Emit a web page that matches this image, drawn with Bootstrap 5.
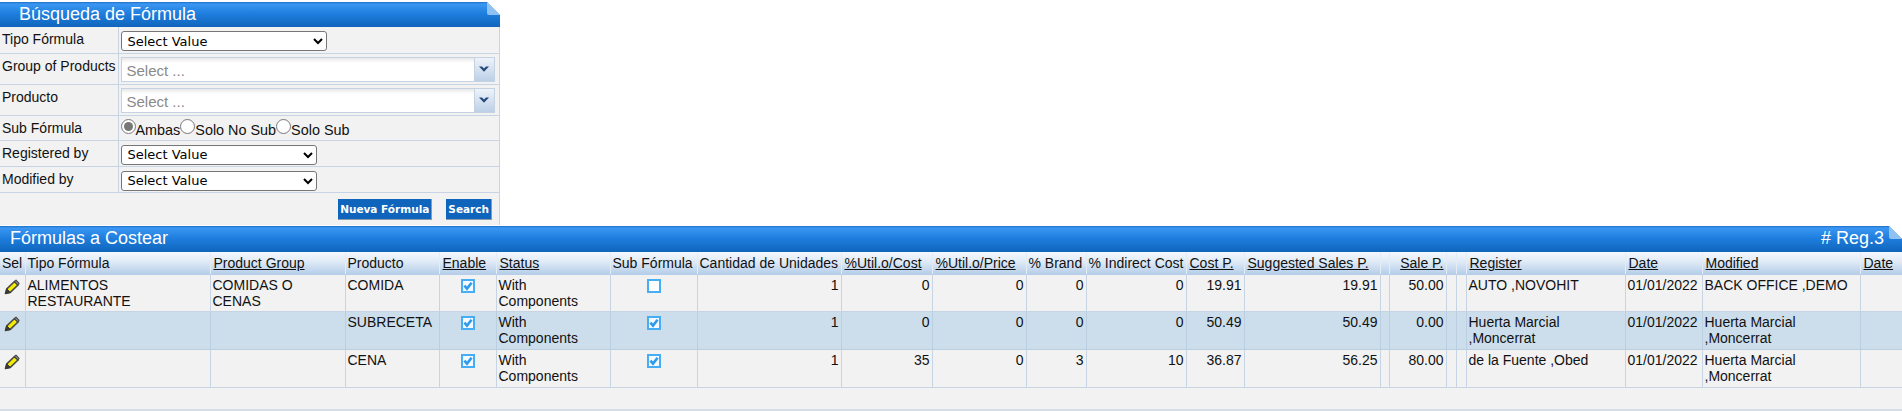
<!DOCTYPE html>
<html lang="es">
<head>
<meta charset="utf-8">
<title>Fórmulas</title>
<link href="https://cdn.jsdelivr.net/npm/bootstrap@5.3.0/dist/css/bootstrap.min.css" rel="stylesheet">
<style>
html,body{background:#fff;}
body{font-family:"Liberation Sans",Arial,sans-serif;font-size:14px;line-height:16px;color:#111;overflow:hidden;}
.bar-blue{position:relative;height:26px;background:linear-gradient(#1f6fc4 0,#3b97f2 2px,#1f7fdf 45%,#0f65bb 100%);color:#fff;font-size:18px;line-height:25px;}
.fold{position:absolute;top:0;right:0;}
.top-panel{width:500px;padding-top:2px;}
.top-panel .bar-blue{padding-left:19px;height:25px;}
.form-rows{border-collapse:collapse;width:500px;table-layout:fixed;background:#f2f2f2;}
.form-rows td{border:1px solid #c6d4e4;border-width:0 1px 1px 0;vertical-align:top;padding:0;}
.form-rows td.lab{padding:4px 0 0 2px;}
.form-rows tr.r26{height:26px;}.form-rows tr.r31{height:31px;}.form-rows tr.r25{height:25px;}.form-rows tr.r32{height:32px;}
.form-rows td.ctl{padding-left:2px;}
.sel-native{display:block;height:20px;margin-top:4px;padding:0 0 0 2px;background:#fff;border:1px solid #767676;border-radius:3px;font-family:"DejaVu Sans",Verdana,sans-serif;font-size:13px;color:#000;}
.w-a{width:206px;}.w-b{width:196px;}
.combo{display:flex;width:374px;height:25px;margin-top:3px;}
.combo-in{flex:1;border:1px solid #c4d2e2;border-right:0;background:linear-gradient(#e8e8e8 0,#fff 5px);color:#8a8a8a;font-size:15px;line-height:26px;padding-left:5px;}
.combo-btn{width:21px;border:1px solid #c4d2e2;background:linear-gradient(#eef3f9,#bcd0e8);display:flex;align-items:center;justify-content:center;}
.radios{display:flex;align-items:flex-start;padding-top:2px;}
.radios input{width:15px;height:15px;margin:1px 0 0 0;accent-color:#777;}
.radios label{padding-top:4px;margin:0;font-size:14.4px;}
.act-row{justify-content:flex-end;padding:6px 7px 4px 0;gap:14px;background:#f2f2f2;width:500px;height:32px;border-right:1px solid #c6d4e4;}
.act{height:21px;border:0;border-right:1px solid #8b9bab;border-bottom:1px solid #8b9bab;background:#0f65bb;color:#fff;font-family:"DejaVu Sans",Verdana,sans-serif;font-weight:700;font-size:10.5px;line-height:20px;padding:0 2px;border-radius:0;}
.list-panel{margin-top:1px;}
.list-panel .bar-blue{height:26px;padding-left:10px;}
.reg{position:absolute;right:18px;top:0;}
.grid-tb{table-layout:fixed;border-collapse:collapse;width:1902px;background:#f2f2f2;}
.grid-tb th,.grid-tb td{border:1px solid #c6d4e4;border-width:0 1px 1px 0;padding:2px 2px 0;vertical-align:top;font-weight:400;white-space:normal;overflow:hidden;}
.grid-tb th{height:23px;padding-top:3px;white-space:nowrap;background:linear-gradient(#f4f8fd 0,#e2ecf7 40%,#b6cee9 100%);border-color:#e4ecf5;border-bottom-color:#b6cee9;}
.grid-tb th.u{padding-left:3px;}
.grid-tb td{height:38px;}
.grid-tb tbody tr:first-child td{height:37px;}
.grid-tb tr.alt td{background:#ccdeec;border-color:#bccfe0;}
.grid-tb .u{text-decoration:underline;}
.grid-tb .num{text-align:right;}
.grid-foot{height:23px;background:#f2f2f2;border-bottom:2px solid #d5dde6;}
.chk{display:block;margin:2px auto 0;}
</style>
</head>
<body>
<svg width="0" height="0" class="d-block">
<defs>
<symbol id="fold" viewBox="0 0 14 14">
<path d="M1 0L14 13V0Z" fill="#fff"/>
<path d="M1 0L14 13H3Q1 13 1 11Z" fill="#8fc2f3"/>
</symbol>
<symbol id="pencil" viewBox="0 0 16 16">
<path d="M1.5 14.5L2.8 9.8L10.5 2.5L14 6L6.3 13.4Z" fill="#f5ec00" stroke="#4a4a4a" stroke-width="1.6" stroke-linejoin="round"/>
<path d="M10.5 2.5L12 1.2L15 4.4L14 6Z" fill="#a9a9a9" stroke="#4a4a4a" stroke-width="1.2" stroke-linejoin="round"/>
<path d="M1.5 14.5L2.8 9.8L6.3 13.4Z" fill="#3a3a3a" stroke="#3a3a3a"/>
</symbol>
<symbol id="cb-on" viewBox="0 0 14 14">
<rect x="1" y="1" width="12" height="12" fill="#f4faff" stroke="#45aef5" stroke-width="2"/>
<path d="M3.4 6.6L6 9.6L10.6 3.8" fill="none" stroke="#2f9bea" stroke-width="2.6"/>
</symbol>
<symbol id="cb-off" viewBox="0 0 14 14">
<rect x="1" y="1" width="12" height="12" fill="#fff" stroke="#45aef5" stroke-width="2"/>
</symbol>
<symbol id="chev" viewBox="0 0 12 8">
<path d="M1 1.5H4L6 3.5L8 1.5H11L6 6.8Z" fill="#25497a"/>
</symbol>
</defs>
</svg>

<section class="top-panel">
  <div class="bar-blue">Búsqueda de Fórmula<svg class="fold" width="14" height="14"><use href="#fold"/></svg></div>
  <table class="form-rows">
    <colgroup><col width="118"><col></colgroup>
    <tr class="r26"><td class="lab">Tipo Fórmula</td><td class="ctl"><select class="sel-native w-a"><option>Select Value</option></select></td></tr>
    <tr class="r31"><td class="lab">Group of Products</td><td class="ctl"><div class="combo"><div class="combo-in">Select ...</div><div class="combo-btn"><svg width="12" height="8"><use href="#chev"/></svg></div></div></td></tr>
    <tr class="r31"><td class="lab">Producto</td><td class="ctl"><div class="combo"><div class="combo-in">Select ...</div><div class="combo-btn"><svg width="12" height="8"><use href="#chev"/></svg></div></div></td></tr>
    <tr class="r25"><td class="lab">Sub Fórmula</td><td class="ctl"><div class="radios"><input type="radio" name="sf" id="r1" checked><label for="r1">Ambas</label><input type="radio" name="sf" id="r2"><label for="r2">Solo No Sub</label><input type="radio" name="sf" id="r3"><label for="r3">Solo Sub</label></div></td></tr>
    <tr class="r26"><td class="lab">Registered by</td><td class="ctl"><select class="sel-native w-b"><option>Select Value</option></select></td></tr>
    <tr class="r26"><td class="lab">Modified by</td><td class="ctl"><select class="sel-native w-b"><option>Select Value</option></select></td></tr>
  </table>
  <div class="d-flex act-row">
    <button class="btn act" type="button">Nueva Fórmula</button>
    <button class="btn act" type="button">Search</button>
  </div>
</section>

<section class="list-panel">
  <div class="bar-blue">Fórmulas a Costear<span class="reg"># Reg.3</span><svg class="fold" width="14" height="14"><use href="#fold"/></svg></div>
  <table class="grid-tb">
    <colgroup>
      <col width="25"><col width="185"><col width="135"><col width="94"><col width="57"><col width="114"><col width="87"><col width="144"><col width="91"><col width="94"><col width="60"><col width="100"><col width="58"><col width="136"><col width="9"><col width="57"><col width="10"><col width="10"><col width="159"><col width="77"><col width="158"><col width="42">
    </colgroup>
    <thead><tr>
      <th>Sel</th><th>Tipo Fórmula</th><th class="u">Product Group</th><th>Producto</th><th class="u">Enable</th><th class="u">Status</th><th>Sub Fórmula</th><th>Cantidad de Unidades</th><th class="u">%Util.o/Cost</th><th class="u">%Util.o/Price</th><th>% Brand</th><th>% Indirect Cost</th><th class="u">Cost P.</th><th class="u">Suggested Sales P.</th><th></th><th class="u num">Sale P.</th><th></th><th></th><th class="u">Register</th><th class="u">Date</th><th class="u">Modified</th><th class="u">Date</th>
    </tr></thead>
    <tbody>
      <tr>
        <td><svg class="chk" width="16" height="16"><use href="#pencil"/></svg></td><td>ALIMENTOS RESTAURANTE</td><td>COMIDAS O CENAS</td><td>COMIDA</td><td><svg class="chk" width="14" height="14"><use href="#cb-on"/></svg></td><td>With Components</td><td><svg class="chk" width="14" height="14"><use href="#cb-off"/></svg></td><td class="num">1</td><td class="num">0</td><td class="num">0</td><td class="num">0</td><td class="num">0</td><td class="num">19.91</td><td class="num">19.91</td><td></td><td class="num">50.00</td><td></td><td></td><td>AUTO ,NOVOHIT</td><td>01/01/2022</td><td>BACK OFFICE ,DEMO</td><td></td>
      </tr>
      <tr class="alt">
        <td><svg class="chk" width="16" height="16"><use href="#pencil"/></svg></td><td></td><td></td><td>SUBRECETA</td><td><svg class="chk" width="14" height="14"><use href="#cb-on"/></svg></td><td>With Components</td><td><svg class="chk" width="14" height="14"><use href="#cb-on"/></svg></td><td class="num">1</td><td class="num">0</td><td class="num">0</td><td class="num">0</td><td class="num">0</td><td class="num">50.49</td><td class="num">50.49</td><td></td><td class="num">0.00</td><td></td><td></td><td>Huerta Marcial ,Moncerrat</td><td>01/01/2022</td><td>Huerta Marcial ,Moncerrat</td><td></td>
      </tr>
      <tr>
        <td><svg class="chk" width="16" height="16"><use href="#pencil"/></svg></td><td></td><td></td><td>CENA</td><td><svg class="chk" width="14" height="14"><use href="#cb-on"/></svg></td><td>With Components</td><td><svg class="chk" width="14" height="14"><use href="#cb-on"/></svg></td><td class="num">1</td><td class="num">35</td><td class="num">0</td><td class="num">3</td><td class="num">10</td><td class="num">36.87</td><td class="num">56.25</td><td></td><td class="num">80.00</td><td></td><td></td><td>de la Fuente ,Obed</td><td>01/01/2022</td><td>Huerta Marcial ,Moncerrat</td><td></td>
      </tr>
    </tbody>
  </table>
  <div class="grid-foot"></div>
</section>
</body>
</html>
